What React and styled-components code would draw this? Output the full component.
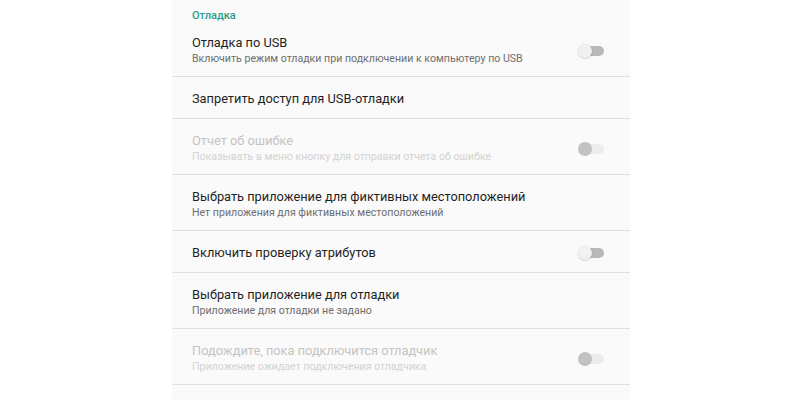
import React from "react";
import styled, { createGlobalStyle } from "styled-components";

const Global = createGlobalStyle`
  html, body { margin: 0; padding: 0; background: #ffffff; }
  body { font-family: Roboto, "Noto Sans", Arial, sans-serif; }
`;

const Page = styled.div`
  width: 800px;
  height: 400px;
  overflow: hidden;
  display: flex;
  background: #ffffff;
`;

const Panel = styled.div`
  margin-left: 172px;
  width: 458px;
  background: #fafafa;
  display: flex;
  flex-direction: column;
`;

const Category = styled.div`
  box-sizing: border-box;
  height: 21px;
  padding: 10px 20px 0;
  color: #2a9a8c;
  font-size: 11px;
  font-weight: 500;
  line-height: 12px;
`;

const Row = styled.div`
  box-sizing: border-box;
  height: ${(p) => (p.$twoLine ? 56 : 42)}px;
  padding: ${(p) => (p.$twoLine ? "4px" : "2px")} 26px 0 20px;
  display: flex;
  align-items: center;
  border-bottom: 1px solid #e0e0e0;
  flex-shrink: 0;
`;

const Texts = styled.div`
  flex: 1;
  display: flex;
  flex-direction: column;
`;

const Title = styled.div`
  font-size: 12.8px;
  line-height: 16px;
  color: ${(p) => (p.$disabled ? "#c4c4c4" : "#1f1f1f")};
`;

const Summary = styled.div`
  font-size: 10.6px;
  line-height: 15px;
  color: ${(p) => (p.$disabled ? "#d2d2d2" : "#6e6e6e")};
`;

const Toggle = styled.div`
  position: relative;
  width: 26px;
  height: 14px;
  flex-shrink: 0;
`;

const Track = styled.div`
  position: absolute;
  left: 6px;
  top: 2px;
  width: 20px;
  height: 10px;
  border-radius: 5px;
  background: ${(p) => (p.$disabled ? "#ececec" : "#b9b9b9")};
`;

const Thumb = styled.div`
  position: absolute;
  left: 0;
  top: 0;
  width: 14px;
  height: 14px;
  border-radius: 50%;
  background: ${(p) => (p.$disabled ? "#c2c2c2" : "#f1f1f1")};
  box-shadow: ${(p) => (p.$disabled ? "none" : "0 0.5px 1.5px rgba(0,0,0,0.25)")};
`;

const Switch = ({ disabled }) => (
  <Toggle>
    <Track $disabled={disabled} />
    <Thumb $disabled={disabled} />
  </Toggle>
);

const items = [
  {
    title: "Отладка по USB",
    summary: "Включить режим отладки при подключении к компьютеру по USB",
    toggle: true,
  },
  { title: "Запретить доступ для USB-отладки" },
  {
    title: "Отчет об ошибке",
    summary: "Показывать в меню кнопку для отправки отчета об ошибке",
    toggle: true,
    disabled: true,
  },
  {
    title: "Выбрать приложение для фиктивных местоположений",
    summary: "Нет приложения для фиктивных местоположений",
  },
  { title: "Включить проверку атрибутов", toggle: true },
  {
    title: "Выбрать приложение для отладки",
    summary: "Приложение для отладки не задано",
  },
  {
    title: "Подождите, пока подключится отладчик",
    summary: "Приложение ожидает подключения отладчика",
    toggle: true,
    disabled: true,
  },
];

export default function App() {
  return (
    <Page>
      <Global />
      <Panel>
        <Category>Отладка</Category>
        {items.map((it, i) => (
          <Row key={i} $twoLine={!!it.summary}>
            <Texts>
              <Title $disabled={it.disabled}>{it.title}</Title>
              {it.summary && <Summary $disabled={it.disabled}>{it.summary}</Summary>}
            </Texts>
            {it.toggle && <Switch disabled={it.disabled} />}
          </Row>
        ))}
      </Panel>
    </Page>
  );
}
